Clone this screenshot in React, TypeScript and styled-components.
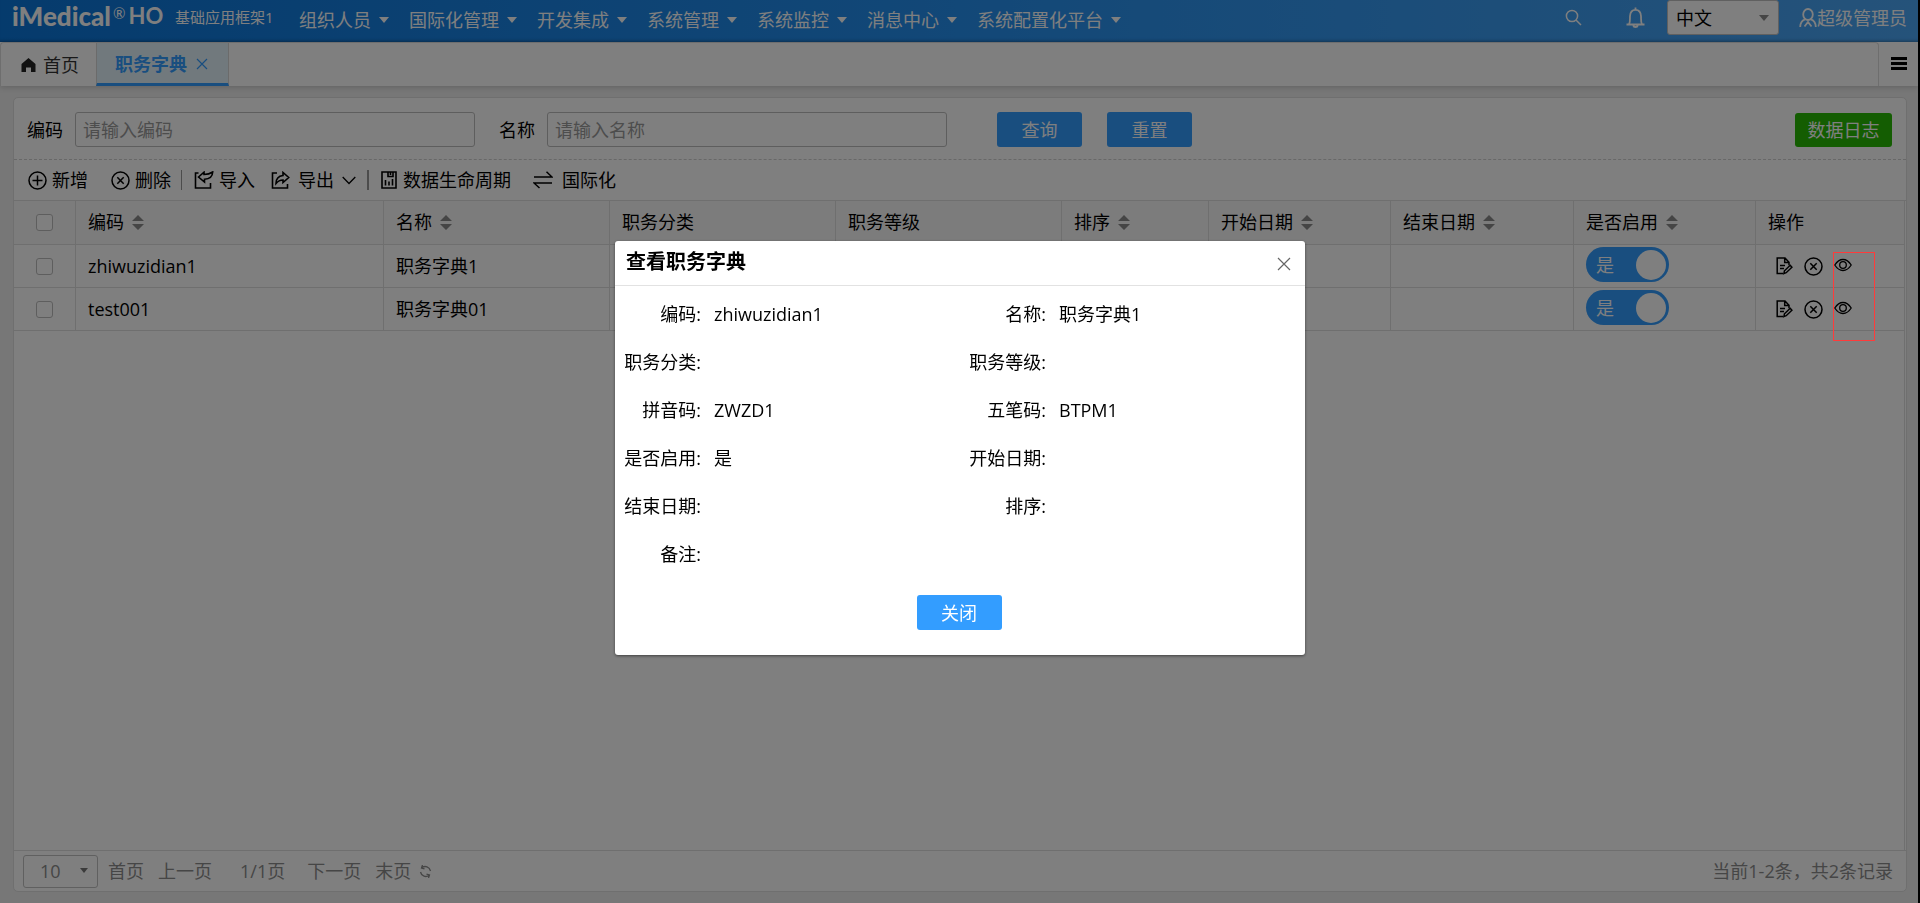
import React from "react";
import styled, { createGlobalStyle, css } from "styled-components";

const GlobalStyle = createGlobalStyle`
  *, *::before, *::after { box-sizing: border-box; }
  body { margin: 0; background: #000; }
  body, button, input, select {
    font-family: "Open Sans", "Noto Sans CJK SC", sans-serif;
    font-size: 18px;
    line-height: 24px;
    color: #000;
  }
  button { border: 0; padding: 0; background: none; cursor: pointer; white-space: nowrap; }
`;

const Page = styled.div`
  display: flex;
  flex-direction: column;
  min-height: 100vh;
  background: #eeeeee;
  border-right: 2px solid #000;
`;

/* ---------- top bar ---------- */

const TopBar = styled.header`
  display: flex;
  align-items: flex-start;
  height: 42px;
  padding: 0 11px 0 12px;
  color: #fff;
  background: linear-gradient(90deg, #0b76da 0%, #2590f0 50%, #4ba6f5 100%);
  box-shadow: inset 0 -3px 3px -2px rgba(0, 0, 0, 0.25);
`;

const Logo = styled.div`
  display: flex;
  align-items: flex-start;
  width: 163px;
  padding-top: 4px;
  font-family: Lato, sans-serif;
  font-weight: 900;
  font-size: 26px;
  line-height: 24px;
`;

const Registered = styled.sup`
  margin: 1px 3px 0 2px;
  font-size: 15px;
  font-weight: 400;
  line-height: 16px;
`;

const Product = styled.span`
  font-size: 22px;
  font-weight: 700;
`;

const SystemName = styled.div`
  width: 124px;
  padding-top: 5px;
  font-size: 15px;
  white-space: nowrap;
`;

const MainNav = styled.nav`
  display: flex;
  flex: 1;
  gap: 20px;
  padding-top: 8px;
`;

const NavItem = styled.button`
  display: flex;
  align-items: center;
  gap: 8px;
  color: #fff;
`;

const Caret = styled.i<{ $size?: number; $color?: string }>`
  flex: none;
  width: 0;
  height: 0;
  border: ${(p) => p.$size ?? 5}px solid transparent;
  border-top: ${(p) => (p.$size ?? 5) + 1}px solid ${(p) => p.$color ?? "currentColor"};
  border-bottom: 0;
`;

const TopTools = styled.div`
  display: flex;
  align-items: center;
  height: 35px;
`;

const IconButton = styled.button<{ $gap?: number; $color?: string }>`
  display: flex;
  margin-right: ${(p) => p.$gap ?? 0}px;
  color: ${(p) => p.$color ?? "inherit"};
`;

const SelectBox = styled.div<{ $width: number; $height: number; $muted?: boolean }>`
  position: relative;
  width: ${(p) => p.$width}px;
  height: ${(p) => p.$height}px;
  background: #fff;
  border: 1px solid #c0c0c0;
  border-radius: 3px;

  select {
    appearance: none;
    width: 100%;
    height: 100%;
    padding: 0 8px;
    background: transparent;
    border: 0;
    line-height: 24px;
    ${(p) => p.$muted && css`padding-left: 16px; color: #8c8c8c;`}
  }

  ${Caret} {
    position: absolute;
    right: 9px;
    top: 50%;
    margin-top: -3px;
    pointer-events: none;
  }
`;

const UserButton = styled.button`
  display: flex;
  align-items: center;
  margin-left: 20px;
  color: #fff;
`;

/* ---------- tabs ---------- */

const TabBar = styled.div`
  display: flex;
  height: 44px;
  background: #fff;
  box-shadow: 0 1px 6px rgba(0, 0, 0, 0.18);
`;

const TabList = styled.div`
  display: flex;
  flex: 1;
  border: 1px solid #dcdcdc;
  border-bottom: 0;
  border-radius: 4px 4px 0 0;
`;

const Tab = styled.button<{ $active?: boolean }>`
  display: flex;
  align-items: center;
  gap: ${(p) => (p.$active ? 9 : 7)}px;
  padding: ${(p) => (p.$active ? "2px 20px 0 18px" : "0 17px 0 20px")};
  color: #333;
  ${(p) =>
    p.$active &&
    css`
      color: #339dff;
      font-weight: 700;
      background: #e3f2fb;
      border-left: 1px solid #d6d6d6;
      border-right: 1px solid #d6d6d6;
      border-bottom: 3px solid #339dff;
    `}
`;

const TabMenu = styled.button`
  display: flex;
  align-items: center;
  justify-content: center;
  width: 39px;
`;

/* ---------- content card ---------- */

const Card = styled.main`
  display: flex;
  flex-direction: column;
  flex: 1;
  margin: 11px 11px 11px 13px;
  background: #fff;
  border: 1px solid #dedede;
  border-radius: 5px;
`;

const SearchForm = styled.form`
  display: flex;
  align-items: center;
  height: 62px;
  padding: 2px 14px 0 13px;
  border-bottom: 1px dashed #d0d0d0;
`;

const Field = styled.label`
  display: flex;
  align-items: center;
  gap: 12px;
  margin-right: 24px;
  white-space: nowrap;

  input {
    width: 400px;
    height: 35px;
    padding: 0 7px;
    border: 1px solid #bcbcbc;
    border-radius: 3px;
    background: #fff;
  }
  input::placeholder { color: #9a9a9a; opacity: 1; }
`;

const Button = styled.button<{ $green?: boolean }>`
  height: ${(p) => (p.$green ? 34 : 35)}px;
  width: ${(p) => (p.$green ? 97 : 85)}px;
  color: #fff;
  background: ${(p) => (p.$green ? "#28ba05" : "#339dff")};
  border-radius: 3px;
`;

const SearchActions = styled.div`
  display: flex;
  flex: 1;
  gap: 25px;
  margin-left: 26px;
`;

const Toolbar = styled.div`
  display: flex;
  align-items: center;
  height: 41px;
  padding-left: 14px;
  border-bottom: 1px solid #dedede;
`;

const Tool = styled.button<{ $after?: number; $gap?: number }>`
  display: flex;
  align-items: center;
  gap: ${(p) => p.$gap ?? 5}px;
  margin-right: ${(p) => p.$after ?? 0}px;
`;

const Divider = styled.span<{ $thick?: boolean }>`
  width: ${(p) => (p.$thick ? 2 : 1)}px;
  height: 20px;
  margin-right: 12px;
  background: #999;
`;

const Grid = styled.div`
  flex: 1;
  margin-right: 1px;
  border-right: 1px solid #dedede;
`;

const Table = styled.table`
  width: 100%;
  table-layout: fixed;
  border-collapse: separate;
  border-spacing: 0;

  th, td {
    height: 43px;
    padding: 0 0 0 12px;
    text-align: left;
    font-weight: 400;
    white-space: nowrap;
    border-right: 1px solid #dedede;
    border-bottom: 1px solid #dedede;
  }
  th { height: 44px; padding-bottom: 2px; background: #f8f8f8; }
  th:first-child, td:first-child { padding: 0; text-align: center; }
  th:last-child, td:last-child { border-right: 0; }
`;

const HeadLabel = styled.span`
  display: flex;
  align-items: center;
  gap: 8px;
`;

const Tick = styled.input`
  appearance: none;
  display: block;
  width: 17px;
  height: 17px;
  margin: 0 auto 0 22px;
  border: 1px solid #bcbcbc;
  border-radius: 3px;
  background: #fff;
`;

const Toggle = styled.label`
  display: flex;
  align-items: center;
  justify-content: space-between;
  width: 83px;
  height: 35px;
  margin-bottom: 3px;
  padding: 0 3px 0 10px;
  color: #fff;
  background: #339dff;
  border-radius: 18px;

  input {
    appearance: none;
    width: 30px;
    height: 30px;
    margin: 0;
    border-radius: 50%;
    background: #fff;
  }
`;

const RowActions = styled.div`
  display: flex;
  align-items: center;
  gap: 11px;
  padding-left: 8px;
`;

const Pager = styled.footer`
  display: flex;
  align-items: center;
  height: 41px;
  padding: 0 13px 0 9px;
  color: #8c8c8c;
  border-top: 1px solid #dedede;
`;

const PagerLink = styled.button<{ $left: number }>`
  display: flex;
  margin-left: ${(p) => p.$left}px;
  color: #8c8c8c;
`;

const PagerText = styled.span`
  margin-left: 28px;
`;

const PagerSummary = styled.span`
  flex: 1;
  text-align: right;
`;

/* ---------- dialog ---------- */

const Overlay = styled.div`
  position: fixed;
  inset: 0;
  display: flex;
  justify-content: center;
  align-items: flex-start;
  padding-top: 241px;
  background: rgba(0, 0, 0, 0.5);
`;

const Dialog = styled.section`
  width: 690px;
  background: #fff;
  border-radius: 3px;
  box-shadow: 0 1px 3px rgba(0, 0, 0, 0.5);
`;

const DialogHead = styled.header`
  display: flex;
  align-items: center;
  justify-content: space-between;
  height: 45px;
  padding: 2px 14px 0 11px;
  border-bottom: 1px solid #e2e2e2;
`;

const DialogTitle = styled.h2`
  margin: 0 0 4px;
  font-size: 20px;
  line-height: 24px;
  font-weight: 700;
`;

const Details = styled.dl`
  display: grid;
  grid-template-columns: 86px 1fr 86px 1fr;
  grid-auto-rows: 24px;
  row-gap: 24px;
  margin: 0;
  padding-top: 16px;
`;

const Term = styled.dt`
  text-align: right;
  white-space: nowrap;
`;

const Value = styled.dd`
  margin: 0;
  padding-left: 13px;
`;

const DialogFoot = styled.footer`
  display: flex;
  justify-content: center;
  padding: 29px 2px 25px 0;
`;

const Highlight = styled.div`
  position: absolute;
  top: 252px;
  right: 45px;
  width: 42px;
  height: 89px;
  border: 1px solid #ff3b3b;
  pointer-events: none;
`;

/* ---------- icons ---------- */

type IconProps = { w: number; h?: number; stroke?: number; children: React.ReactNode };

const Svg = styled.svg`
  display: block;
  flex: none;
`;

const Icon = ({ w, h = w, stroke = 2, children }: IconProps) => (
  <Svg
    width={w}
    height={h}
    viewBox={`0 0 ${w} ${h}`}
    fill="none"
    stroke="currentColor"
    strokeWidth={stroke}
    aria-hidden="true"
  >
    {children}
  </Svg>
);

const SearchIcon = () => (
  <Icon w={17} stroke={1.5}>
    <circle cx="7" cy="7" r="5.6" />
    <path d="M11 11l5 5" />
  </Icon>
);
const BellIcon = () => (
  <Icon w={19} h={21} stroke={1.8}>
    <path d="M.5 17.500h18M3 17.500C4.400 15 3.800 12 4 9.200C4.200 5 6.500 2.800 9.500 2.800S14.800 5 15 9.200C15.200 12 14.600 15 16 17.500M9.500.5v2M7.200 18.500c.5 2 4.100 2 4.600 0" />
  </Icon>
);
const UserIcon = () => (
  <Icon w={18} h={20} stroke={1.8}>
    <ellipse cx="9" cy="6.500" rx="4.800" ry="5.500" />
    <path d="M1.200 19c0-4 1.800-6.500 4.800-7.700M16.800 19c0-4-1.800-6.500-4.800-7.700M5.500 18.500l3.500-4.500 3.500 4.500" />
  </Icon>
);
const HomeIcon = () => (
  <Icon w={15} h={14} stroke={0}>
    <path fill="#222" d="M7.500 0L14.500 6v8h-4.500V9.500h-5V14H.5V6z" />
  </Icon>
);
const CrossIcon = ({ size }: { size: number }) => (
  <Icon w={size} stroke={1.2}>
    <path d={`M1 1L${size - 1} ${size - 1}M${size - 1} 1L1 ${size - 1}`} />
  </Icon>
);
const MenuIcon = () => (
  <Icon w={16} h={14} stroke={3}>
    <path d="M0 1.500h16M0 6.500h16M0 11.500h16" />
  </Icon>
);
const AddIcon = () => (
  <Icon w={19} stroke={1.5}>
    <circle cx="9.500" cy="9.500" r="8.500" />
    <path d="M9.500 4.500v10M4.500 9.500h10" />
  </Icon>
);
const RemoveIcon = () => (
  <Icon w={19} stroke={1.5}>
    <circle cx="9.500" cy="9.500" r="8.500" />
    <path d="M6.300 6.300l6.400 6.400M12.700 6.300l-6.400 6.400" />
  </Icon>
);
const ImportIcon = () => (
  <Icon w={20} h={18} stroke={1.6}>
    <path d="M4.500 2H1.500v15h15V12" />
    <path d="M4.500 6L10 1.200V3.500C13.500 3.500 16 2.800 18.700 1C18.500 5.500 15.500 8 10.500 8.300V11z" />
  </Icon>
);
const ExportIcon = () => (
  <Icon w={19} h={18} stroke={1.6}>
    <path d="M6 2H1.500v15h15v-4" />
    <path d="M5 12.500C5 7.500 7.500 5 12 4.500V1.500l5.700 5-5.700 5V9C9 9 7 10 5 12.500z" />
  </Icon>
);
const ChevronIcon = () => (
  <Icon w={14} h={9} stroke={1.3}>
    <path d="M.7 1l6.300 6.500L13.300 1" />
  </Icon>
);
const LifecycleIcon = () => (
  <Icon w={16} h={18} stroke={1.6}>
    <path d="M1 1h14v16H1zM7 1v4.500h5V1M9.500 1v3M4.500 14.500V9M8 14.500V10.500M11.500 14.500V8" />
  </Icon>
);
const SwapIcon = () => (
  <Icon w={20} h={18} stroke={1.5}>
    <path d="M1 6h18L13.500.8M19 12H1l5.500 5" />
  </Icon>
);
const SortIcon = () => (
  <Icon w={12} h={16} stroke={0}>
    <path fill="#8a8a8a" d="M6 1l6 6H0zM6 16l6-6H0z" />
  </Icon>
);
const EditIcon = () => (
  <Icon w={17} h={18} stroke={1.5}>
    <path d="M7 16.500H1.200V1H9l4 4.200v3M8.700 1v4.500H13M4 8.500h5M4 11.500h4" />
    <path d="M8.500 13.700l5.700-5.400 1.700 1.900-5.700 5.500-2.300.8z" />
  </Icon>
);
const EyeIcon = () => (
  <Icon w={18} h={16} stroke={1.3}>
    <path d="M.8 7C3 3.500 5.700 1.500 9 1.500S15 3.500 17.200 7C15 10.500 12.300 12.500 9 12.500S3 10.500.8 7z" />
    <circle cx="9" cy="7" r="3.300" />
  </Icon>
);
const RefreshIcon = () => (
  <Icon w={13} h={13} stroke={1.3}>
    <path d="M3 2.500C6 .5 10.500 1.500 11.500 6M1.500 7C2.500 11.500 7 12.500 10 10.500M3.500 0L2.500 3l3 .8M9.500 13l1-3-3-.8" />
  </Icon>
);

/* ---------- data ---------- */

const menus = ["组织人员", "国际化管理", "开发集成", "系统管理", "系统监控", "消息中心", "系统配置化平台"];

const columns: { title: string; width?: number; sortable?: boolean }[] = [
  { title: "编码", width: 308, sortable: true },
  { title: "名称", width: 226, sortable: true },
  { title: "职务分类", width: 226 },
  { title: "职务等级", width: 226 },
  { title: "排序", width: 147, sortable: true },
  { title: "开始日期", width: 182, sortable: true },
  { title: "结束日期", width: 183, sortable: true },
  { title: "是否启用", width: 182, sortable: true },
  { title: "操作" },
];

const rows = [
  { code: "zhiwuzidian1", name: "职务字典1" },
  { code: "test001", name: "职务字典01" },
];

const details: [string, string][] = [
  ["编码", "zhiwuzidian1"],
  ["名称", "职务字典1"],
  ["职务分类", ""],
  ["职务等级", ""],
  ["拼音码", "ZWZD1"],
  ["五笔码", "BTPM1"],
  ["是否启用", "是"],
  ["开始日期", ""],
  ["结束日期", ""],
  ["排序", ""],
  ["备注", ""],
];

export default function App() {
  return (
    <>
      <GlobalStyle />
      <Page>
        <TopBar>
          <Logo>
            iMedical<Registered>®</Registered>
            <Product>HO</Product>
          </Logo>
          <SystemName>基础应用框架1</SystemName>
          <MainNav>
            {menus.map((m) => (
              <NavItem key={m}>
                {m}
                <Caret />
              </NavItem>
            ))}
          </MainNav>
          <TopTools>
            <IconButton aria-label="搜索" $gap={44}><SearchIcon /></IconButton>
            <IconButton aria-label="通知" $gap={22}><BellIcon /></IconButton>
            <SelectBox $width={112} $height={35}>
              <select aria-label="语言" defaultValue="中文">
                <option>中文</option>
              </select>
              <Caret $color="#8a8a8a" />
            </SelectBox>
            <UserButton><UserIcon />超级管理员</UserButton>
          </TopTools>
        </TopBar>

        <TabBar>
          <TabList>
            <Tab><HomeIcon />首页</Tab>
            <Tab $active>职务字典<CrossIcon size={12} /></Tab>
          </TabList>
          <TabMenu aria-label="菜单"><MenuIcon /></TabMenu>
        </TabBar>

        <Card>
          <SearchForm onSubmit={(e) => e.preventDefault()}>
            <Field>编码<input placeholder="请输入编码" /></Field>
            <Field>名称<input placeholder="请输入名称" /></Field>
            <SearchActions>
              <Button type="submit">查询</Button>
              <Button type="reset">重置</Button>
            </SearchActions>
            <Button type="button" $green>数据日志</Button>
          </SearchForm>

          <Toolbar>
            <Tool $after={23}><AddIcon />新增</Tool>
            <Tool $after={10}><RemoveIcon />删除</Tool>
            <Divider />
            <Tool $after={16}><ImportIcon />导入</Tool>
            <Tool $after={11} $gap={8}><ExportIcon />导出<ChevronIcon /></Tool>
            <Divider $thick />
            <Tool $after={22} $gap={6}><LifecycleIcon />数据生命周期</Tool>
            <Tool $gap={9}><SwapIcon />国际化</Tool>
          </Toolbar>

          <Grid>
            <Table>
              <colgroup>
                <col width={62} />
                {columns.map((c) => <col key={c.title} width={c.width} />)}
              </colgroup>
              <thead>
                <tr>
                  <th><Tick type="checkbox" aria-label="全选" /></th>
                  {columns.map((c) => (
                    <th key={c.title}>
                      <HeadLabel>{c.title}{c.sortable && <SortIcon />}</HeadLabel>
                    </th>
                  ))}
                </tr>
              </thead>
              <tbody>
                {rows.map((r) => (
                  <tr key={r.code}>
                    <td><Tick type="checkbox" aria-label={r.code} /></td>
                    <td>{r.code}</td>
                    <td>{r.name}</td>
                    <td />
                    <td />
                    <td />
                    <td />
                    <td />
                    <td>
                      <Toggle>是<input type="checkbox" role="switch" defaultChecked /></Toggle>
                    </td>
                    <td>
                      <RowActions>
                        <IconButton aria-label="编辑"><EditIcon /></IconButton>
                        <IconButton aria-label="删除"><RemoveIcon /></IconButton>
                        <IconButton aria-label="查看"><EyeIcon /></IconButton>
                      </RowActions>
                    </td>
                  </tr>
                ))}
              </tbody>
            </Table>
          </Grid>

          <Pager>
            <SelectBox $width={75} $height={33} $muted>
              <select aria-label="每页条数" defaultValue="10">
                <option>10</option>
              </select>
              <Caret $size={4} $color="#777" />
            </SelectBox>
            <PagerLink $left={10}>首页</PagerLink>
            <PagerLink $left={14}>上一页</PagerLink>
            <PagerText>1/1页</PagerText>
            <PagerLink $left={22}>下一页</PagerLink>
            <PagerLink $left={14}>末页</PagerLink>
            <PagerLink $left={8} aria-label="刷新"><RefreshIcon /></PagerLink>
            <PagerSummary>当前1-2条，共2条记录</PagerSummary>
          </Pager>
        </Card>
      </Page>

      <Overlay>
        <Dialog role="dialog" aria-labelledby="dialog-title">
          <DialogHead>
            <DialogTitle id="dialog-title">查看职务字典</DialogTitle>
            <IconButton aria-label="关闭窗口" $color="#666"><CrossIcon size={14} /></IconButton>
          </DialogHead>
          <Details>
            {details.map(([label, value]) => (
              <React.Fragment key={label}>
                <Term>{label}:</Term>
                <Value>{value}</Value>
              </React.Fragment>
            ))}
          </Details>
          <DialogFoot>
            <Button>关闭</Button>
          </DialogFoot>
        </Dialog>
        <Highlight />
      </Overlay>
    </>
  );
}
